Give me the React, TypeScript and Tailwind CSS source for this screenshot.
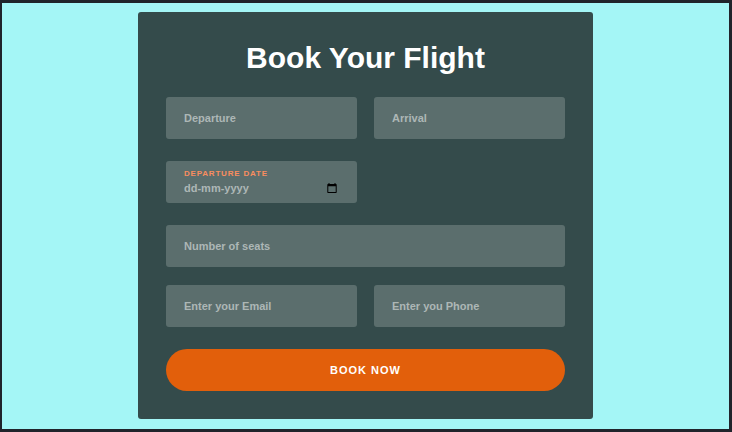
import type { InputHTMLAttributes } from "react";

type FieldProps = InputHTMLAttributes<HTMLInputElement> & { label: string };

function Field({ label, ...rest }: FieldProps) {
  return (
    <input
      aria-label={label}
      placeholder={label}
      className="block h-[42px] w-full min-w-0 rounded-[3px] bg-[#5b6e6d] px-[18px] text-[11px] font-bold text-white outline-none placeholder:text-[#adb7b6]"
      {...rest}
    />
  );
}

function DateField() {
  return (
    <div className="min-w-0 rounded-[3px] bg-[#5b6e6d] px-[18px] py-[7px]">
      <label
        htmlFor="departure-date"
        className="block text-[8px] leading-3 font-bold tracking-widest text-[#f98d5f] uppercase"
      >
        Departure date
      </label>
      <div className="flex items-center justify-between">
        <input
          id="departure-date"
          type="text"
          inputMode="numeric"
          placeholder="dd-mm-yyyy"
          className="h-4 w-0 min-w-0 flex-1 bg-transparent text-[11px] font-bold text-white outline-none placeholder:text-[#adb7b6]"
        />
        <button type="button" aria-label="Open calendar" className="px-0.5 text-black">
          <svg viewBox="0 0 10 10" className="block size-[10px]">
            <path
              fill="currentColor"
              fillRule="evenodd"
              d="M1.5 0h1v1h5V0h1v1H9a.7.7 0 0 1 .7.7v7.6a.7.7 0 0 1-.7.7H1a.7.7 0 0 1-.7-.7V1.7A.7.7 0 0 1 1 1h.5zM1.300 3.300V9h7.400V3.300z"
            />
          </svg>
        </button>
      </div>
    </div>
  );
}

export default function App() {
  return (
    <main className="min-h-screen border-y-3 border-r-3 border-l-2 border-[#20242b] bg-[#a4f6f6] py-[9px] font-['Liberation_Sans',Arial,sans-serif]">
      <form
        className="mx-auto w-full max-w-[455px] rounded-[3px] bg-[#344b4b] p-7"
        onSubmit={(event) => event.preventDefault()}
      >
        <h1 className="mb-[21px] text-center text-[30px] leading-9 font-bold text-white">
          Book Your Flight
        </h1>
        <div className="flex flex-col gap-[22px]">
          <div className="grid grid-cols-2 gap-[17px]">
            <Field type="text" label="Departure" />
            <Field type="text" label="Arrival" />
          </div>
          <div className="grid grid-cols-2 gap-[17px]">
            <DateField />
          </div>
          <div className="flex flex-col gap-[18px]">
            <Field type="number" min={1} label="Number of seats" />
            <div className="grid grid-cols-2 gap-[17px]">
              <Field type="email" label="Enter your Email" />
              <Field type="tel" label="Enter you Phone" />
            </div>
          </div>
          <button
            type="submit"
            className="h-[42px] w-full rounded-full bg-[#e25f0b] text-[11px] font-bold tracking-[1px] text-white uppercase"
          >
            Book now
          </button>
        </div>
      </form>
    </main>
  );
}
